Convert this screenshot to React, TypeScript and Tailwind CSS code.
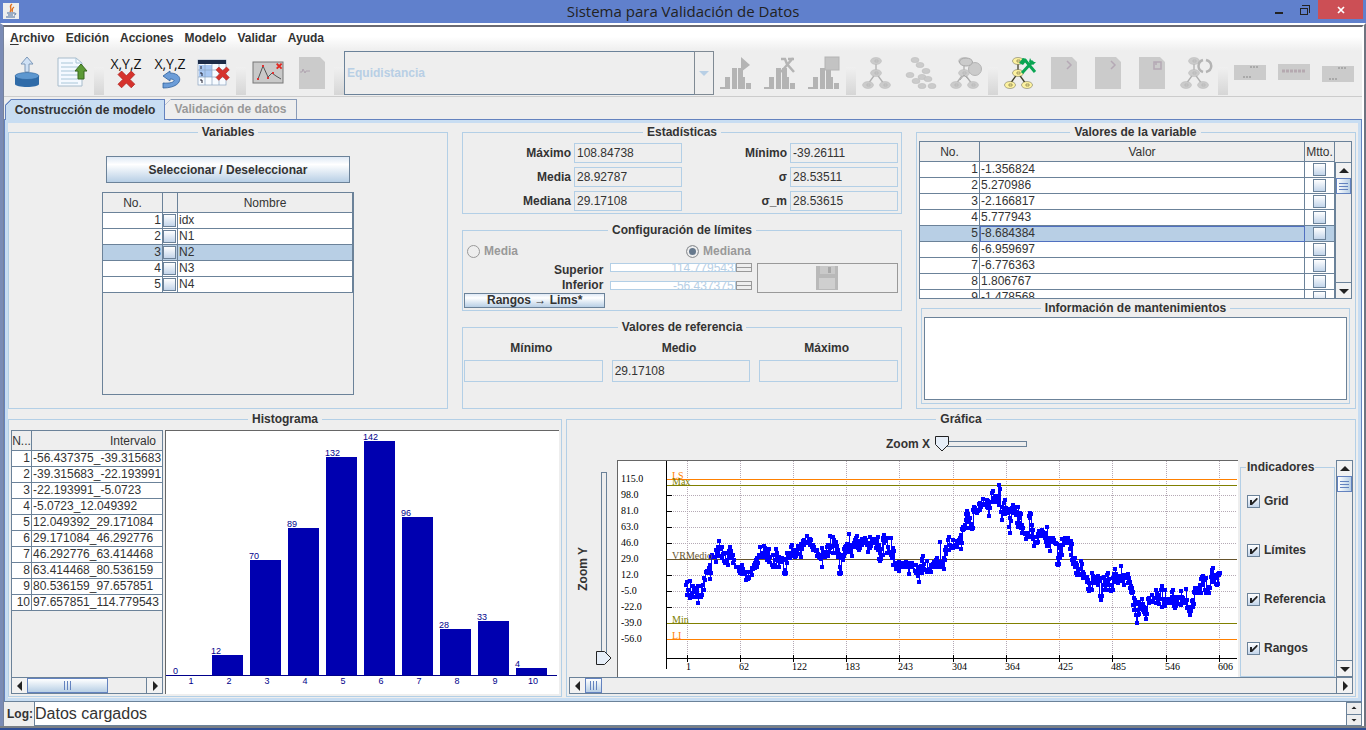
import React from "react";
import clsx from "clsx";

/* ---------- shared pieces ---------- */

const line = "border-[#6b8299]";

function Panel({ title, className, children }: { title: string; className?: string; children?: React.ReactNode }) {
  return (
    <fieldset className={clsx("min-w-0 border border-[#b3cfe6]", className)}>
      <legend className="mx-auto px-1 text-xs leading-[14px] font-bold">{title}</legend>
      {children}
    </fieldset>
  );
}

type Dir = "up" | "down" | "left" | "right";
const arrows: Record<Dir, string> = {
  up: "M0 6 L5 1 L10 6 Z",
  down: "M0 2 L5 7 L10 2 Z",
  left: "M6 0 L1 5 L6 10 Z",
  right: "M2 0 L7 5 L2 10 Z",
};

function Arrow({ dir, className, fill = "#222" }: { dir: Dir; className?: string; fill?: string }) {
  const flat = dir === "up" || dir === "down";
  return (
    <svg viewBox={flat ? "0 0 10 8" : "0 0 8 10"} className={className ?? (flat ? "h-2 w-2.5" : "h-2.5 w-2")} aria-hidden="true">
      <path d={arrows[dir]} fill={fill} />
    </svg>
  );
}

function ScrollButton({ dir, className }: { dir: Dir; className?: string }) {
  return (
    <button type="button" aria-label={dir} className={clsx("flex shrink-0 items-center justify-center bg-[#f2f2f2]", className)}>
      <Arrow dir={dir} />
    </button>
  );
}

function VScroll() {
  return (
    <div className={clsx("flex w-[17px] shrink-0 flex-col border bg-[#eeeeee]", line)}>
      <ScrollButton dir="up" className="h-[15px] w-full" />
      <div className="flex h-4 shrink-0 flex-col items-center justify-center gap-[2px] border border-[#6382bf] bg-linear-to-r from-white to-[#b8cfe5]">
        <i className="h-px w-[9px] bg-[#6382bf]" />
        <i className="h-px w-[9px] bg-[#6382bf]" />
        <i className="h-px w-[9px] bg-[#6382bf]" />
      </div>
      <div className="flex-1" />
      <ScrollButton dir="down" className={clsx("h-4 w-full border-t", line)} />
    </div>
  );
}

function HScroll({ thumb }: { thumb: string }) {
  return (
    <div className={clsx("flex h-[17px] shrink-0 border bg-[#eeeeee]", line)}>
      <ScrollButton dir="left" className="w-[15px]" />
      <div className={clsx("flex shrink-0 items-center justify-center gap-[2px] border border-[#6382bf] bg-linear-to-b from-white to-[#b8cfe5]", thumb)}>
        <i className="h-[9px] w-px bg-[#6382bf]" />
        <i className="h-[9px] w-px bg-[#6382bf]" />
        <i className="h-[9px] w-px bg-[#6382bf]" />
      </div>
      <div className="flex-1" />
      <ScrollButton dir="right" className={clsx("w-4 border-l", line)} />
    </div>
  );
}

const metalBtn = "border border-[#6b8299] bg-linear-to-b from-[#dfe9f5] via-white via-30% to-[#b8cfe5] font-bold";
const boxCls = "block size-[13px] appearance-none border border-[#6b8299] bg-linear-to-b from-white to-[#c3d5ea]";

function CheckLabel({ id, text }: { id: string; text: string }) {
  return (
    <div className="flex items-center gap-1">
      <span className="relative block size-[13px]">
        <input id={id} type="checkbox" defaultChecked className={boxCls + " peer"} />
        <svg viewBox="0 0 13 13" className="pointer-events-none absolute inset-0 hidden size-[13px] peer-checked:block" aria-hidden="true">
          <path d="M3 5h2v2.5l4.5-4.5h1v1.5L5 10H3z" fill="#222" />
        </svg>
      </span>
      <label htmlFor={id} className="text-xs leading-[14px] font-bold">{text}</label>
    </div>
  );
}

/* ---------- toolbar icons ---------- */

function Icon({ children, label, disabled }: { children: React.ReactNode; label: string; disabled?: boolean }) {
  return (
    <button type="button" aria-label={label} disabled={disabled} className="flex h-11 w-11 shrink-0 items-center justify-center">
      <svg viewBox="0 0 32 32" className="size-8 overflow-visible" aria-hidden="true">{children}</svg>
    </button>
  );
}

const redX = "M3 0 L7 4 L11 0 L14 3 L10 7 L14 11 L11 14 L7 10 L3 14 L0 11 L4 7 L0 3 Z";
const g1 = "#cbcbcb";
const g2 = "#b4b4b4";

function Bars() {
  return (
    <g fill={g2}>
      <rect x="0" y="30" width="5" height="2" />
      <rect x="5" y="20" width="5" height="12" />
      <rect x="12" y="11" width="5" height="21" />
      <rect x="18" y="11" width="5" height="21" />
      <rect x="21" y="20" width="4" height="12" />
      <rect x="26" y="26" width="5" height="6" />
    </g>
  );
}

function Tree({ fill, stroke, text }: { fill: string; stroke: string; text?: string }) {
  return (
    <g>
      <path d="M14 4 V16 L6 27 M14 16 L22 27" stroke={stroke} strokeWidth="1.3" fill="none" />
      {[[14, 4], [14, 16], [6, 28], [23, 28]].map(([x, y]) => (
        <g key={`${x}-${y}`}>
          <ellipse cx={x} cy={y} rx="5.5" ry="3.5" fill={fill} stroke={stroke} strokeWidth=".4" />
          {text && <path d={`M${x - 1} ${y - 1} h3 v2 h-3 z`} fill="none" stroke={text} strokeWidth=".8" />}
        </g>
      ))}
    </g>
  );
}

function Doc({ mark }: { mark: React.ReactNode }) {
  return (
    <g>
      <path d="M3 0 H24 L29 5 V32 H3 Z" fill={g1} />
      <g fill="none" stroke="#b5a9b5" strokeWidth="1.5">{mark}</g>
    </g>
  );
}

function Sep() {
  return (
    <div className="flex h-11 w-2.5 shrink-0 items-end">
      <div className="h-7 w-full bg-linear-to-b from-[#f0f0f0] to-[#d6d6d6]" />
    </div>
  );
}

function Toolbar() {
  return (
    <div className="flex h-[46px] shrink-0 items-start border-b border-[#cccccc] px-0.5">
      <Icon label="Cargar datos">
        <path d="M13 15 V7 H9 L15 0 L21 7 H17 V15 Z" fill="#cfe1f5" stroke="#7d98b8" />
        <path d="M3 19 V27 C3 31 27 31 27 27 V19 Z" fill="#2f6ba8" />
        <ellipse cx="15" cy="19" rx="12" ry="3.5" fill="#5d97cf" stroke="#2a5f98" strokeWidth=".6" />
      </Icon>
      <Icon label="Cargar modelo">
        <path d="M2 1 H20 L26 6 V29 H2 Z" fill="#f4f9ff" stroke="#a8bccb" />
        <path d="M20 1 V6 H26 M5 6 H17 M5 10 H22 M5 14 H22 M5 18 H22 M5 22 H22 M5 26 H22" stroke="#a9c6d8" fill="none" />
        <path d="M22 22 V14 H19 L25 7 L31 14 H28 V22 Z" fill="#5c9a35" stroke="#39691f" />
      </Icon>
      <Sep />
      <Icon label="Eliminar variables">
        <text x="16" y="12" textAnchor="middle" fontSize="14" fontFamily="Open Sans, Noto Sans, sans-serif" fill="#111">X,Y,Z</text>
        <path d={redX} transform="translate(8 14) scale(1.2)" fill="#d6322c" stroke="#a81f1b" strokeWidth=".6" />
      </Icon>
      <Icon label="Restaurar variables">
        <text x="16" y="12" textAnchor="middle" fontSize="14" fontFamily="Open Sans, Noto Sans, sans-serif" fill="#111">X,Y,Z</text>
        <path d="M9 19 L16 14 V16 C30 16 30 31 9 31 V26 C21 27 23 22 16 22 V24 Z" fill="#6c9dd8" stroke="#2f5f9c" strokeWidth=".8" />
      </Icon>
      <Icon label="Eliminar tabla">
        <rect x="0" y="3" width="28" height="25" fill="#f7fbff" stroke="#8ba3bf" strokeWidth=".7" />
        <rect x="0" y="3" width="28" height="4" fill="#1d2c48" />
        <path d="M1 8 H14 V20 H1 Z" fill="#a9c8f3" />
        <path d="M0 13 H28 M0 20 H28 M7 7 V28 M14 7 V28 M21 7 V28" stroke="#8ba3bf" strokeWidth=".7" />
        <path d="M3 9v3 M2 16h2v3 M2 23h2v3" stroke="#222233" fill="none" />
        <path d={redX} transform="translate(18 10) scale(.95)" fill="#d6322c" stroke="#a81f1b" strokeWidth=".6" />
      </Icon>
      <Sep />
      <Icon label="Eliminar gráfica">
        <rect x="1" y="5" width="30" height="21" fill="#c9c9c9" stroke="#777" />
        <path d="M6 22 L11 9 L16 20 L20 16 L24 19 L29 22" fill="none" stroke="#555" />
        <g fill="#d33"><rect x="5" y="21" width="2" height="2" /><rect x="10" y="8" width="2" height="2" /><rect x="15" y="20" width="2" height="2" /><rect x="20" y="15" width="2" height="2" /></g>
        <path d={redX} transform="translate(24 6) scale(.45)" fill="#e22b25" />
      </Icon>
      <Icon label="Documento" disabled>
        <path d="M3 0 H24 L29 5 V32 H3 Z" fill={g1} />
        <path d="M4 15 h2 l1 -3 l2 4 l1 -2 h4" fill="none" stroke="#b0a4b0" />
      </Icon>
      <Sep />
      <div className="relative min-w-0 flex-1">
        <select aria-label="Método" disabled className="block h-11 w-full appearance-none border border-[#6b8299] bg-[#eeeeee] pl-0.5 text-xs font-bold text-[#b8cfe5] opacity-100">
          <option>Equidistancia</option>
        </select>
        <span className="pointer-events-none absolute inset-y-0 right-0 flex w-5 items-center justify-center border border-[#7f8a94]">
          <Arrow dir="down" fill="#b8cfe5" />
        </span>
      </div>
      <Icon label="Construir" disabled><Bars /><path d="M21 0 L30 8 L21 15 Z" fill={g2} /></Icon>
      <Icon label="Ajustar" disabled>
        <Bars />
        <path d="M17 2 l4 0 l2 5 l7 8 M29 1 l-12 14 M24 2 h6" stroke={g2} strokeWidth="2.5" fill="none" />
      </Icon>
      <Icon label="Guardar histograma" disabled><Bars /><rect x="17" y="0" width="14" height="13" fill="#c3c3c3" stroke={g2} /></Icon>
      <Sep />
      <Icon label="Red" disabled><Tree fill={g1} stroke="#b0b0b0" text="#b8b8b8" /></Icon>
      <Icon label="Nodos" disabled>
        {[[9, 3], [14, 8], [4, 18], [20, 14], [10, 24], [16, 20], [22, 22], [16, 29], [26, 29]].map(([x, y]) => (
          <ellipse key={`${x}-${y}`} cx={x} cy={y} rx="4" ry="2.6" fill={g1} stroke="#bdbdbd" strokeWidth=".6" />
        ))}
      </Icon>
      <Icon label="Inferencia" disabled>
        <Tree fill={g1} stroke="#b0b0b0" text="#b8b8b8" />
        <circle cx="25" cy="12" r="6.5" fill={g1} stroke="#b5b5b5" />
        <ellipse cx="16" cy="5" rx="6.5" ry="4" fill={g1} stroke="#a8a8a8" />
        <path d="M10 23 L14 18 L19 23" stroke="#aaa" fill="none" />
      </Icon>
      <Sep />
      <Icon label="Configurar red">
        <Tree fill="#fdf2a0" stroke="#3f3f28" text="#8d8550" />
        <path d="M18 3 L21 3 L31 15 M18 16 L29 4" stroke="#0aa553" strokeWidth="3" fill="none" />
        <path d="M15 6 L19 1 L23 3 L19 8 Z M26 1 L28 5 L32 5 L29 8 L25 5 Z" fill="#0aa553" />
      </Icon>
      <Icon label="Nuevo" disabled><Doc mark={<path d="M19 4 L23 8 L19 12" />} /></Icon>
      <Icon label="Abrir" disabled><Doc mark={<path d="M19 4 L23 8 L19 12" />} /></Icon>
      <Icon label="Guardar" disabled><Doc mark={<path d="M18 5 H25 V12 H18 Z M20 5 V8" />} /></Icon>
      <Icon label="Actualizar red" disabled>
        <Tree fill={g1} stroke="#b0b0b0" text="#b8b8b8" />
        <path d="M23 3 C17 5 17 13 23 15 M26 3 C33 5 33 13 26 15" stroke="#b4b4b4" strokeWidth="2.5" fill="none" />
      </Icon>
      <Sep />
      <Icon label="Fila superior" disabled><rect x="0" y="8" width="32" height="15" fill={g1} /><path d="M16 10 h8 M9 20 h9" stroke="#a9a9a9" strokeWidth="2" strokeDasharray="2 1" /></Icon>
      <Icon label="Fila central" disabled><rect x="0" y="7" width="32" height="16" fill={g1} /><path d="M4 14 h24" stroke="#b5a9b0" strokeWidth="3" strokeDasharray="3 1" /></Icon>
      <Icon label="Fila inferior" disabled><rect x="0" y="9" width="32" height="16" fill={g1} /><path d="M16 11 h8 M7 22 h9" stroke="#a9a9a9" strokeWidth="2" strokeDasharray="2 1" /></Icon>
    </div>
  );
}

/* ---------- top row ---------- */

const th = "border-r border-b border-[#6b8299] p-0 text-center font-normal leading-[18px]";
const td = "h-4 border-r border-b border-[#6b8299] p-0 leading-[15px] whitespace-nowrap";

function Variables() {
  const rows = ["idx", "N1", "N2", "N3", "N4"];
  return (
    <Panel title="Variables" className="flex flex-col items-center">
      <div className="flex flex-col items-center pt-[17px]">
        <button type="button" className={clsx(metalBtn, "h-[27px] w-[244px] text-xs")}>Seleccionar / Deseleccionar</button>
        <div className={clsx("mt-[9px] h-[203px] w-[252px] overflow-hidden border", line)}>
          <table className="w-full table-fixed border-separate border-spacing-0 text-xs">
            <thead>
              <tr className="h-5">
                <th className={clsx(th, "w-[60px]")}>No.</th>
                <th className={clsx(th, "w-[15px]")} aria-label="Selección" />
                <th className={th}>Nombre</th>
              </tr>
            </thead>
            <tbody>
              {rows.map((name, i) => (
                <tr key={name} className={i === 2 ? "bg-[#b8cfe5]" : "bg-white"}>
                  <td className={clsx(td, "pr-px text-right")}>{i + 1}</td>
                  <td className={td}><input type="checkbox" aria-label={name} className={boxCls} /></td>
                  <td className={clsx(td, "pl-px")}>{name}</td>
                </tr>
              ))}
            </tbody>
          </table>
        </div>
      </div>
    </Panel>
  );
}

function Stat({ label, value, id }: { label: string; value: string; id: string }) {
  return (
    <>
      <label htmlFor={id} className="pr-[3px] text-right font-bold">{label}</label>
      <input id={id} readOnly defaultValue={value} className="h-5 w-full min-w-0 border border-[#b3cfe6] bg-transparent px-0.5" />
    </>
  );
}

function Spinner({ id, value }: { id: string; value: string }) {
  return (
    <div className="flex h-[9px] overflow-hidden">
      <input id={id} disabled defaultValue={value} className="h-[9px] w-full min-w-0 border border-[#b3cfe6] bg-white p-0 pr-px text-right text-xs text-[#b8cfe5]" />
      <div className="flex w-4 shrink-0 flex-col border border-[#999]">
        <button type="button" disabled aria-label="Incrementar" className="flex-1 border-b border-[#999]" />
        <button type="button" disabled aria-label="Disminuir" className="flex-1" />
      </div>
    </div>
  );
}

function Radio({ id, text, checked }: { id: string; text: string; checked?: boolean }) {
  return (
    <div className="flex items-center gap-1 pl-1">
      <input
        id={id}
        type="radio"
        name="centro"
        disabled
        defaultChecked={checked}
        className="size-[13px] appearance-none rounded-full border border-[#999] checked:bg-[#66788c] checked:shadow-[inset_0_0_0_2px_#eeeeee]"
      />
      <label htmlFor={id} className="font-bold text-[#999999]">{text}</label>
    </div>
  );
}

function Center() {
  const refs: [string, string][] = [["Mínimo", ""], ["Medio", "29.17108"], ["Máximo", ""]];
  return (
    <div className="flex min-w-0 flex-col justify-between text-xs">
      <Panel title="Estadísticas" className="h-[89px]">
        <div className="grid grid-cols-4 items-center gap-y-1 px-[3px] pt-1">
          <Stat id="s1" label="Máximo" value="108.84738" />
          <Stat id="s2" label="Mínimo" value="-39.26111" />
          <Stat id="s3" label="Media" value="28.92787" />
          <Stat id="s4" label="σ" value="28.53511" />
          <Stat id="s5" label="Mediana" value="29.17108" />
          <Stat id="s6" label="σ_m" value="28.53615" />
        </div>
      </Panel>
      <Panel title="Configuración de límites" className="h-[88px]">
        <div className="grid grid-cols-2 pt-1.5">
          <Radio id="r1" text="Media" />
          <Radio id="r2" text="Mediana" checked />
        </div>
        <div className="grid grid-cols-3 gap-x-[5px] pr-[3px] pl-px pt-1">
          <div className="flex flex-col pr-0.5 text-right leading-[15px] font-bold">
            <label htmlFor="sup">Superior</label>
            <label htmlFor="inf">Inferior</label>
          </div>
          <div className="flex flex-col gap-[9px]">
            <Spinner id="sup" value="114.779543" />
            <Spinner id="inf" value="-56.437375" />
          </div>
          <button type="button" disabled aria-label="Guardar límites" className="flex h-[30px] items-center justify-center border border-[#999]">
            <svg viewBox="0 0 22 24" className="h-6 w-[22px]" aria-hidden="true">
              <rect width="22" height="24" fill="#b9b9b9" />
              <path d="M4 0h15v8H4z" fill="#c9c9c9" />
              <path d="M12 1h3v6h-3z" fill="#a8a8a8" />
              <path d="M3 12h16v11H3z" fill="#cfcfcf" />
            </svg>
          </button>
          <button type="button" className={clsx(metalBtn, "h-[15px] leading-[13px]")}>Rangos → Lims*</button>
        </div>
      </Panel>
      <Panel title="Valores de referencia" className="h-[89px]">
        <div className="grid grid-cols-3 gap-x-[9px] pr-[3px] pl-px pt-[7px]">
          {refs.map(([label, value]) => (
            <div key={label} className="flex flex-col gap-1">
              <label htmlFor={"ref-" + label} className="pr-1 text-center leading-[15px] font-bold">{label}</label>
              <input id={"ref-" + label} readOnly defaultValue={value} className="h-[22px] w-full border border-[#b3cfe6] bg-transparent px-0.5" />
            </div>
          ))}
        </div>
      </Panel>
    </div>
  );
}

function Values() {
  const rows = ["-1.356824", "5.270986", "-2.166817", "5.777943", "-8.684384", "-6.959697", "-6.776363", "1.806767", "-1.478568"];
  return (
    <Panel title="Valores de la variable" className="pr-[3px] pl-0.5">
      <div className={clsx("mt-0.5 flex h-[158px] flex-col overflow-hidden border", line)}>
        <div className="flex min-h-0 flex-1">
          <table className="h-fit w-full table-fixed border-separate border-spacing-0 text-xs">
            <thead>
              <tr className="h-5">
                <th className={clsx(th, "w-[60px]")}>No.</th>
                <th className={th}>Valor</th>
                <th className={clsx(th, "w-[30px]")}>Mtto.</th>
              </tr>
            </thead>
            <tbody>
              {rows.map((v, i) => (
                <tr key={v} className={i === 4 ? "bg-[#b8cfe5]" : "bg-white"}>
                  <td className={clsx(td, "pr-px text-right")}>{i + 1}</td>
                  <td className={clsx(td, i === 4 && "outline-1 -outline-offset-1 outline-[#5070c0]", "pl-px")}>{v}</td>
                  <td className={td}><input type="checkbox" aria-label={"Mantenimiento " + (i + 1)} className={boxCls + " mx-auto"} /></td>
                </tr>
              ))}
            </tbody>
          </table>
          <div className="-mr-px -mb-px flex pt-5"><VScroll /></div>
        </div>
      </div>
      <Panel title="Información de mantenimientos" className="mx-0.5 mt-0.5 h-[103px] px-0.5">
        <textarea aria-label="Información de mantenimientos" className={clsx("mt-0.5 block h-[83px] w-full resize-none border bg-white", line)} />
      </Panel>
    </Panel>
  );
}

/* ---------- histogram ---------- */

const counts = [0, 12, 70, 89, 132, 142, 96, 28, 33, 4];
const barTops = [244, 224, 129, 97, 26, 10, 86, 198, 190, 237];
const intervals = [
  "-56.437375_-39.315683", "-39.315683_-22.193991", "-22.193991_-5.0723", "-5.0723_12.049392", "12.049392_29.171084",
  "29.171084_46.292776", "46.292776_63.414468", "63.414468_80.536159", "80.536159_97.657851", "97.657851_114.779543",
];

function Histogram() {
  return (
    <Panel title="Histograma" className="flex flex-col px-0.5">
      <div className="flex h-full gap-0.5 pt-1 pb-0.5">
        <div className={clsx("flex w-[152px] shrink-0 flex-col border", line)}>
          <div className="min-h-0 flex-1 overflow-hidden">
            <table className="w-[223px] table-fixed border-separate border-spacing-0 text-xs">
              <thead>
                <tr className="h-5">
                  <th className={clsx(th, "w-5")}>N...</th>
                  <th className={th}>Intervalo</th>
                </tr>
              </thead>
              <tbody>
                {intervals.map((v, i) => (
                  <tr key={v} className="bg-white">
                    <td className={clsx(td, "pr-px text-right")}>{i + 1}</td>
                    <td className={clsx(td, "pl-px")}>{v}</td>
                  </tr>
                ))}
              </tbody>
            </table>
          </div>
          <div className="-m-px"><HScroll thumb="w-[81px]" /></div>
        </div>
        <div className="min-w-0 flex-1 overflow-hidden border-t border-l border-[#666] bg-white">
          <svg viewBox="0 0 392 262" className="h-[262px] w-[392px]" fontFamily="Liberation Sans, Arial, sans-serif" fontSize="9" fill="#00008b" shapeRendering="crispEdges">
            {counts.map((c, i) => (
              <g key={i}>
                <rect x={8 + 38 * i} y={barTops[i]} width="31" height={244 - barTops[i]} fill="#0000b0" />
                <text x={7 + 38 * i} y={barTops[i] - 1}>{c}</text>
                <text x={25 + 38 * i} y="253" textAnchor="middle">{i + 1}</text>
              </g>
            ))}
            <rect x="0" y="244" width="391" height="1" />
          </svg>
        </div>
      </div>
    </Panel>
  );
}

/* ---------- line chart: x, highest and lowest marker around that x ---------- */

const band: [number, number, number][] = [
  [69, 121, 134], [72, 120, 137], [75, 125, 136], [78, 127, 136], [80, 125, 142], [83, 125, 136], [86, 117, 129], [89, 110, 112], [92, 104, 118],
  [94, 94, 96], [98, 89, 101], [101, 80, 95], [104, 86, 97], [107, 92, 102], [110, 92, 104], [112, 86, 97], [115, 94, 102], [119, 106, 106],
  [122, 107, 112], [124, 104, 113], [128, 111, 119], [130, 111, 118], [134, 107, 114], [137, 102, 107], [139, 97, 106], [142, 86, 96],
  [146, 85, 96], [149, 92, 99], [151, 88, 101], [155, 94, 106], [158, 88, 106], [161, 96, 106], [164, 97, 101], [167, 109, 113], [169, 92, 102],
  [172, 92, 97], [174, 84, 95], [177, 89, 96], [180, 85, 93], [183, 83, 96], [186, 79, 84], [189, 75, 82], [192, 78, 84], [195, 84, 89],
  [199, 89, 95], [202, 94, 97], [204, 87, 106], [207, 91, 96], [210, 84, 95], [212, 75, 87], [215, 76, 92], [218, 81, 92], [220, 89, 96],
  [222, 106, 113], [225, 94, 99], [227, 86, 92], [229, 83, 91], [231, 73, 89], [234, 84, 95], [237, 79, 86], [239, 75, 84], [241, 81, 89],
  [244, 78, 84], [247, 77, 82], [250, 82, 91], [252, 76, 87], [255, 78, 82], [258, 78, 87], [260, 76, 89], [262, 92, 100], [265, 79, 94],
  [266, 74, 82], [269, 77, 92], [273, 77, 94], [275, 87, 104], [278, 102, 108], [281, 101, 110], [284, 102, 106], [288, 101, 106],
  [291, 102, 113], [294, 102, 106], [298, 104, 112], [301, 106, 121], [304, 100, 112], [305, 95, 109], [309, 100, 111], [313, 104, 111],
  [316, 101, 106], [319, 97, 106], [322, 81, 106], [326, 97, 108], [328, 86, 93], [331, 76, 89], [335, 79, 87], [339, 80, 86], [341, 79, 82],
  [343, 74, 88], [345, 66, 69], [348, 59, 67], [349, 50, 57], [352, 57, 67], [354, 64, 68], [356, 46, 51], [359, 49, 52], [362, 42, 49],
  [365, 38, 44], [369, 39, 46], [371, 42, 55], [375, 30, 41], [378, 35, 41], [381, 24, 44], [384, 46, 59], [387, 39, 53], [390, 48, 52],
  [392, 57, 72], [395, 44, 52], [398, 46, 54], [400, 46, 66], [402, 52, 57], [404, 64, 72], [408, 72, 78], [410, 72, 76], [412, 52, 57],
  [414, 64, 76], [416, 76, 85], [419, 76, 82], [421, 70, 75], [424, 69, 75], [427, 72, 77], [429, 66, 85], [432, 77, 90], [435, 77, 81],
  [438, 82, 83], [440, 97, 104], [442, 87, 97], [444, 78, 94], [447, 77, 82], [450, 77, 82], [453, 80, 94], [455, 97, 103], [457, 97, 106],
  [459, 104, 114], [463, 100, 114], [465, 111, 117], [469, 116, 121], [471, 122, 130], [474, 112, 129], [477, 116, 122], [480, 115, 124],
  [483, 117, 139], [486, 116, 129], [488, 121, 129], [490, 112, 122], [493, 124, 130], [495, 117, 129], [497, 108, 121], [500, 116, 122],
  [503, 105, 117], [506, 114, 124], [510, 113, 122], [512, 121, 127], [514, 127, 132], [516, 137, 149], [519, 149, 162], [521, 141, 153],
  [524, 138, 144], [526, 146, 151], [528, 149, 158], [531, 137, 142], [534, 134, 141], [538, 129, 142], [541, 134, 143], [544, 125, 146],
  [547, 129, 145], [550, 138, 142], [554, 136, 142], [555, 129, 141], [557, 139, 147], [560, 136, 143], [563, 130, 144], [565, 137, 142],
  [568, 128, 142], [570, 146, 147], [572, 147, 154], [575, 139, 146], [577, 127, 132], [580, 127, 132], [583, 118, 132], [585, 115, 121],
  [588, 117, 132], [591, 126, 132], [594, 112, 121], [595, 107, 119], [599, 117, 124], [601, 112, 114],
];

const samples: [number, number][] = band.flatMap(([x, top, bottom], i): [number, number][] => {
  const span = bottom - top;
  const before = Math.round(top + (span * (1 + ((i * 7) % 4))) / 5);
  const after = Math.round(top + (span * (1 + ((i * 5 + 2) % 4))) / 5);
  const peak: [number, number][] = i % 2 ? [[x, bottom], [x, top]] : [[x, top], [x, bottom]];
  return [[x - 1, before], ...peak, [x + 1, after]];
});

const gridX = [69, 122, 175, 228, 281, 335, 388, 441, 494, 548, 601];
const gridXLabels = [1, 62, 122, 183, 243, 304, 364, 425, 485, 546, 606];
const yLabels = ["115.0", "98.0", "81.0", "63.0", "46.0", "29.0", "12.0", "-5.0", "-22.0", "-39.0", "-56.0"];
const gridY = [34, 50, 66, 82, 98, 114, 130, 146];

function Chart() {
  return (
    <svg viewBox="0 0 620 215" className="h-[215px] w-[620px]" fontFamily="Liberation Serif, Times New Roman, serif" fontSize="10">
      <g shapeRendering="crispEdges">
        <g stroke="#b5a9b5" strokeDasharray="1 1">
          {gridX.map((x) => <path key={x} d={`M${x}.5 0V197`} />)}
          {gridY.map((y) => <path key={y} d={`M49 ${y}.5H619`} />)}
        </g>
        <g stroke="#000">
          <path d="M48.5 0V208 M48 197.5H619" />
          {gridX.map((x) => <path key={x} d={`M${x}.5 194V201`} />)}
          {gridY.map((y) => <path key={y} d={`M49 ${y}.5H54`} />)}
        </g>
        <path d="M49 18.5H619 M49 178.5H619" stroke="#ff8000" />
        <path d="M49 24.5H619 M49 162.5H619" stroke="#808000" />
        <path d="M49 98.5H619" stroke="#66542c" />
        <path d={"M" + samples.map(([x, y]) => `${x} ${y}`).join("L")} fill="none" stroke="#0000ff" />
        <path d={samples.map(([x, y]) => `M${x - 2} ${y - 2}h4v4h-4z`).join("")} fill="#0000ff" />
      </g>
      {yLabels.map((t, i) => <text key={t} x="3" y={21 + 16 * i}>{t}</text>)}
      {gridXLabels.map((t, i) => <text key={t} x={gridX[i] - 1} y="209">{t}</text>)}
      <text x="54" y="18" fill="#ff8000">LS</text>
      <text x="54" y="24" fill="#808000">Max</text>
      <text x="54" y="98" fill="#66542c">VRMedio</text>
      <text x="54" y="162" fill="#808000">Min</text>
      <text x="54" y="178" fill="#ff8000">LI</text>
    </svg>
  );
}

function Grafica() {
  return (
    <Panel title="Gráfica" className="flex flex-col px-0.5">
      <div className="flex h-full flex-col pb-0.5">
        <div className="flex h-[34px] shrink-0 items-center justify-center pt-px pr-2">
          <label htmlFor="zx" className="text-xs leading-[14px] font-bold">Zoom X</label>
          <div className="relative ml-1 h-4 w-[94px]">
            <svg viewBox="0 0 94 16" className="h-4 w-[94px]" aria-hidden="true">
              <rect x="8.5" y="5.5" width="84" height="5" fill="#eee" stroke="#6b8299" />
              <path d="M1.5 .5H14.5V8.5L8 15L1.5 8.5Z" fill="#e6eef8" stroke="#222" />
            </svg>
            <input id="zx" type="range" defaultValue={0} className="absolute inset-0 w-full opacity-0" />
          </div>
        </div>
        <div className="flex min-h-0 flex-1">
          <div className="flex min-w-0 flex-1">
            <div className="flex w-12 shrink-0 items-center justify-between pr-[5px] pl-1.5">
              <label htmlFor="zy" className="rotate-180 text-xs leading-[16px] font-bold [writing-mode:vertical-rl]">Zoom Y</label>
              <div className="relative h-[194px] w-4">
                <svg viewBox="0 0 16 194" className="h-[194px] w-4" aria-hidden="true">
                  <rect x="5.5" y=".5" width="5" height="184" fill="#eee" stroke="#6b8299" />
                  <path d="M.5 179.5H8.5L15 186L8.5 192.5H.5Z" fill="#e6eef8" stroke="#222" />
                </svg>
                <input id="zy" type="range" defaultValue={0} className="absolute inset-0 h-full w-4 opacity-0 [direction:rtl] [writing-mode:vertical-lr]" />
              </div>
            </div>
            <div className="min-w-0 flex-1 overflow-hidden border-t border-l border-[#666] bg-white">
              <Chart />
            </div>
          </div>
          <fieldset className="mr-px ml-0.5 w-[95px] shrink-0 border border-[#b3cfe6] pl-1.5">
            <legend className="-ml-px px-px text-xs leading-[14px] font-bold">Indicadores</legend>
            <div className="flex flex-col gap-[35px] pt-5">
              <CheckLabel id="c1" text="Grid" />
              <CheckLabel id="c2" text="Límites" />
              <CheckLabel id="c3" text="Referencia" />
              <CheckLabel id="c4" text="Rangos" />
            </div>
          </fieldset>
          <VScroll />
        </div>
        <HScroll thumb="w-[17px]" />
      </div>
    </Panel>
  );
}

/* ---------- window ---------- */

const slant = "[clip-path:polygon(6px_0,100%_0,100%_100%,0_100%,0_6px)]";

export default function App() {
  const menus = ["Edición", "Acciones", "Modelo", "Validar", "Ayuda"];
  return (
    <div className="flex h-screen min-h-[730px] flex-col overflow-hidden bg-[#eeeeee] font-['Liberation_Sans',Arial,sans-serif] text-xs text-[#333333]">
      <header className="grid h-[23px] shrink-0 grid-cols-[1fr_auto_1fr] items-start bg-[#6080cc]">
        <div className="p-[3px]">
          <svg viewBox="0 0 16 16" className="size-4" aria-hidden="true">
            <rect width="16" height="16" fill="#eeeeee" />
            <path d="M9 1 C5 4 10 5 7 9 M11 4 C8 6 10 7 9 9" stroke="#e07020" fill="none" strokeWidth="1.4" />
            <path d="M4 10 H11 M5 12 H10 M11 10 C14 10 13 12 11 12 M3 14 H12" stroke="#4a6d9c" fill="none" />
          </svg>
        </div>
        <h1 className="font-['Open_Sans','Noto_Sans',sans-serif] text-[15px] leading-[23px] text-[#222]">Sistema para Validación de Datos</h1>
        <div className="flex h-[19px] justify-end pr-[3px]">
          <button type="button" aria-label="Minimizar" className="flex w-[26px] items-center justify-center">
            <svg viewBox="0 0 10 10" className="size-2.5"><path d="M1 7h8v2H1z" fill="#222" /></svg>
          </button>
          <button type="button" aria-label="Restaurar" className="flex w-[26px] items-center justify-center">
            <svg viewBox="0 0 10 10" className="size-2.5" shapeRendering="crispEdges"><path d="M.5 3.5h7v6h-7z M2 .5h7.5V8" fill="none" stroke="#222" /></svg>
          </button>
          <button type="button" aria-label="Cerrar" className="flex w-[45px] items-center justify-center bg-[#cc4f55]">
            <svg viewBox="0 0 8 8" className="size-2"><path d="M1 1l6 6M7 1L1 7" stroke="#fff" strokeWidth="1.7" /></svg>
          </button>
        </div>
      </header>

      <div className="flex min-h-0 flex-1 flex-col border-t-2 border-r-2 border-l-[3px] border-t-white border-r-[#6f7480] border-l-[#7a8bb5]">
        <div className="flex min-h-0 flex-1 flex-col border-t-2 border-r-2 border-l border-t-[#6a6a72] border-r-white border-l-[#77839c]">
          <nav className="flex h-6 shrink-0 items-center gap-[11px] bg-linear-to-b from-white from-40% to-[#eeeeee] pb-0.5 pl-1.5 font-bold">
            <a href="#archivo"><span className="underline underline-offset-2">A</span>rchivo</a>
            {menus.map((m) => <a key={m} href={"#" + m}>{m}</a>)}
          </nav>

          <Toolbar />

          <div className="z-1 -mb-px flex h-[23px] shrink-0 items-end pl-px" role="tablist">
            <button
              type="button"
              role="tab"
              aria-selected="true"
              className={clsx("h-[21px] w-40 border border-b-0 border-[#6382bf] bg-[#c8ddf2] font-bold whitespace-nowrap", slant, "bg-[linear-gradient(135deg,#6382bf_0_4px,transparent_4px)]")}
            >
              Construcción de modelo
            </button>
            <button
              type="button"
              role="tab"
              aria-selected="false"
              className={clsx("mb-px h-5 w-[132px] border border-b-0 border-l-0 border-[#8a9cb8] pb-0.5 font-bold whitespace-nowrap text-[#999999]", slant, "bg-[linear-gradient(135deg,#8a9cb8_0_4px,transparent_4px)]")}
            >
              Validación de datos
            </button>
          </div>

          <main className="flex min-h-0 flex-1 flex-col gap-[3px] border border-[#6382bf] border-b-[#6b8299] bg-[#eeeeee] py-1 pr-[5px] pl-[3px] shadow-[inset_0_0_0_3px_#c8ddf2]">
            <div className="grid h-[285px] shrink-0 grid-cols-[440fr_440fr_440fr] gap-x-[14px] pt-px">
              <Variables />
              <Center />
              <Values />
            </div>
            <div className="grid min-h-0 flex-1 grid-cols-[554fr_790fr] gap-1">
              <Histogram />
              <Grafica />
            </div>
          </main>

          <footer className="flex h-6 shrink-0 bg-white">
            <label htmlFor="log" className="w-[30px] shrink-0 bg-[#eeeeee] pl-[3px] text-xs leading-6 font-bold">Log:</label>
            <input id="log" readOnly defaultValue="Datos cargados" className={clsx("min-w-0 flex-1 border-b border-l bg-white text-base", line)} />
            <div className={clsx("flex w-4 shrink-0 flex-col border bg-[#eeeeee]", line)}>
              <button type="button" aria-label="Anterior" className={clsx("flex flex-1 items-center justify-center border-b", line)}><Arrow dir="up" className="h-1 w-1.5" /></button>
              <button type="button" aria-label="Siguiente" className="flex flex-1 items-center justify-center"><Arrow dir="down" className="h-1 w-1.5" /></button>
            </div>
          </footer>
        </div>
      </div>
      <div className="h-1 shrink-0 border-t-2 border-[#7a7f84] bg-[#2f4f96]" />
    </div>
  );
}
